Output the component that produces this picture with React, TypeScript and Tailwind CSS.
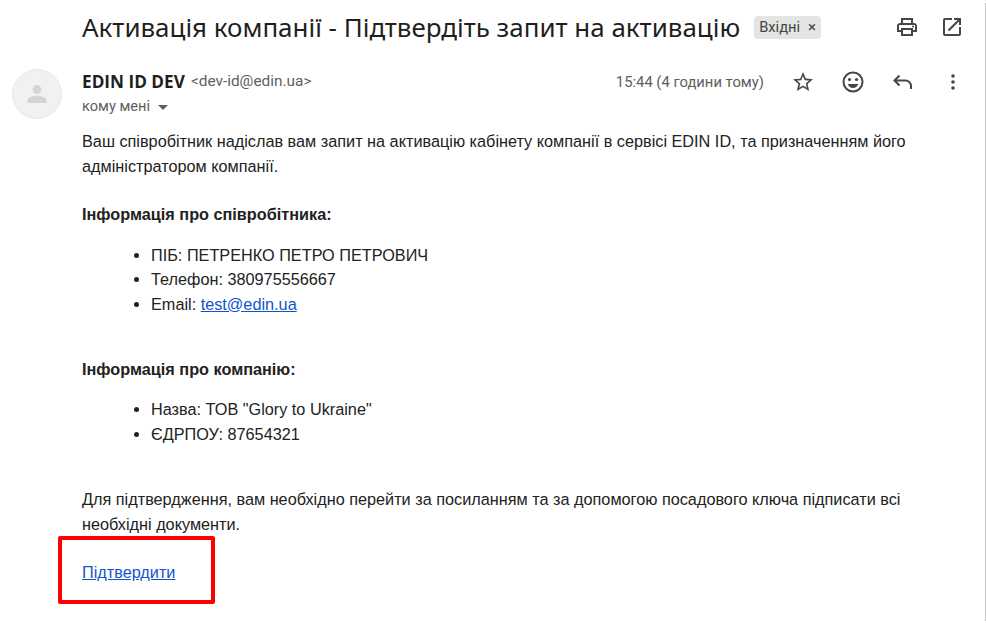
const bodyFont = "font-['Liberation_Sans',Arial,sans-serif]";

const Printer = () => (
    <svg width="24" height="24" viewBox="0 0 24 24" fill="#444746">
        <path d="M19 8h-1V3H6v5H5c-1.66 0-3 1.34-3 3v6h4v4h12v-4h4v-6c0-1.66-1.34-3-3-3zM8 5h8v3H8V5zm8 14H8v-4h8v4zm4-4h-2v-2H6v2H4v-4c0-.55.45-1 1-1h14c.55 0 1 .45 1 1v4z" />
        <circle cx="18" cy="11.5" r="1" />
    </svg>
);

const OpenNew = () => (
    <svg width="24" height="24" viewBox="0 0 24 24" fill="#444746">
        <path d="M19 19H5V5h7V3H5a2 2 0 0 0-2 2v14a2 2 0 0 0 2 2h14c1.1 0 2-.9 2-2v-7h-2v7zM14 3v2h3.59l-9.83 9.83 1.41 1.41L19 6.41V10h2V3h-7z" />
    </svg>
);

const Star = () => (
    <svg width="24" height="24" viewBox="0 0 24 24" fill="#444746">
        <path d="M22 9.24l-7.19-.62L12 2 9.19 8.63 2 9.24l5.46 4.73L5.82 21 12 17.27 18.18 21l-1.63-7.03L22 9.24zM12 15.4l-3.76 2.27 1-4.28-3.32-2.88 4.38-.38L12 6.1l1.71 4.04 4.38.38-3.32 2.88 1 4.28L12 15.4z" />
    </svg>
);

const Smile = () => (
    <svg width="24" height="24" viewBox="0 0 24 24" fill="#444746">
        <path d="M12 1.5a10.5 10.5 0 1 0 0 21 10.5 10.5 0 0 0 0-21zm0 19a8.5 8.5 0 1 1 0-17 8.5 8.5 0 0 1 0 17z" />
        <circle cx="8.5" cy="9.5" r="1.6" />
        <circle cx="15.5" cy="9.5" r="1.6" />
        <path d="M12 18c2.4 0 4.4-1.5 5.2-4H6.8c.8 2.5 2.8 4 5.2 4z" />
    </svg>
);

const Reply = () => (
    <svg width="24" height="24" viewBox="0 0 24 24" fill="none" stroke="#444746" strokeWidth="2">
        <path d="M8.5 5.5 3.5 10.5l5 5" />
        <path d="M3.5 10.5H14.5a5.5 5.5 0 0 1 5.5 5.5v3" />
    </svg>
);

const Dots = () => (
    <svg width="24" height="24" viewBox="0 0 24 24" fill="#444746">
        <circle cx="12" cy="6" r="1.8" />
        <circle cx="12" cy="12" r="1.8" />
        <circle cx="12" cy="18" r="1.8" />
    </svg>
);

const Avatar = () => (
    <div className="flex h-[50px] w-[50px] items-center justify-center rounded-full border border-[#e8e8e8] bg-[#f1f1f1]">
        <svg width="24" height="24" viewBox="0 0 24 24" fill="#d4d4d4">
            <circle cx="12" cy="7.5" r="4.4" />
            <path d="M2.5 21v-2.6c0-3 5.5-4.6 9.5-4.6s9.5 1.6 9.5 4.6V21z" />
        </svg>
    </div>
);

const Bullet = ({ children }: { children: React.ReactNode }) => <li className="h-[24.5px]">{children}</li>;

export default function App() {
    return (
        <div className="relative h-[623px] w-[986px] overflow-hidden bg-white">
            <div className="flex h-[54px] items-center pl-[82px] pr-[22px]">
                <h1 className="font-['Noto_Sans',sans-serif] text-[25.95px] font-normal text-[#1f1f1f]">
                    Активація компанії - Підтвердіть запит на активацію
                </h1>
                <span className="ml-[14px] flex h-[23px] items-center gap-[8px] rounded bg-[#e3e5e3] px-[5px] font-['Roboto',sans-serif] text-[14.7px] text-[#444746]">
                    Вхідні
                    <span className="text-[15px] leading-none">×</span>
                </span>
                <div className="ml-auto flex gap-[21px]">
                    <Printer />
                    <OpenNew />
                </div>
            </div>
            <div className="mt-[15px] flex pl-[12px] pr-[21px]">
                <Avatar />
                <div className="ml-[20px] flex-1">
                    <div className="flex h-[26px] items-center font-['Roboto',sans-serif]">
                        <span className="font-['Open_Sans',sans-serif] text-[17.2px] font-bold text-[#1f1f1f]">EDIN ID DEV</span>
                        <span className="ml-[6px] text-[15.4px] text-[#5e5e5e]">&lt;dev-id@edin.ua&gt;</span>
                        <span className="ml-auto text-[14.8px] text-[#5e5e5e]">15:44 (4 години тому)</span>
                        <div className="ml-[27px] flex gap-[26px]">
                            <Star />
                            <Smile />
                            <Reply />
                            <Dots />
                        </div>
                    </div>
                    <div className="flex h-[24px] items-center font-['Roboto',sans-serif] text-[14.6px] text-[#5e5e5e]">
                        кому мені
                        <span className="ml-[8px] h-0 w-0 border-x-[5px] border-t-[5px] border-x-transparent border-t-[#5e5e5e]" />
                    </div>
                </div>
            </div>
            <div className={`${bodyFont} mt-[10px] pl-[82px] pr-[70px] text-[16.25px] leading-[24.5px] text-[#222222]`}>
                <p>
                    Ваш співробітник надіслав вам запит на активацію кабінету компанії в сервісі EDIN ID, та призначенням
                    його адміністратором компанії.
                </p>
                <p className="mt-[24px] font-bold">Інформація про співробітника:</p>
                <ul className="mt-[16px] list-disc pl-[69px]">
                    <Bullet>ПІБ: ПЕТРЕНКО ПЕТРО ПЕТРОВИЧ</Bullet>
                    <Bullet>Телефон: 380975556667</Bullet>
                    <Bullet>
                        Email: <a className="text-[#1155cc] underline">test@edin.ua</a>
                    </Bullet>
                </ul>
                <p className="mt-[40.5px] font-bold">Інформація про компанію:</p>
                <ul className="mt-[16px] list-disc pl-[69px]">
                    <Bullet>Назва: ТОВ "Glory to Ukraine"</Bullet>
                    <Bullet>ЄДРПОУ: 87654321</Bullet>
                </ul>
                <p className="mt-[41px]">
                    Для підтвердження, вам необхідно перейти за посиланням та за допомогою посадового ключа підписати всі
                    необхідні документи.
                </p>
                <p className="mt-[24px]">
                    <a className="text-[#1155cc] underline">Підтвердити</a>
                </p>
            </div>
            <div className="absolute left-[58px] top-[536px] h-[68px] w-[157px] rounded-[2px] border-[4px] border-[#ff0000]" />
            <div className="absolute bottom-[2px] right-0 top-[3px] w-px bg-[#c8c8c8]" />
        </div>
    );
}
